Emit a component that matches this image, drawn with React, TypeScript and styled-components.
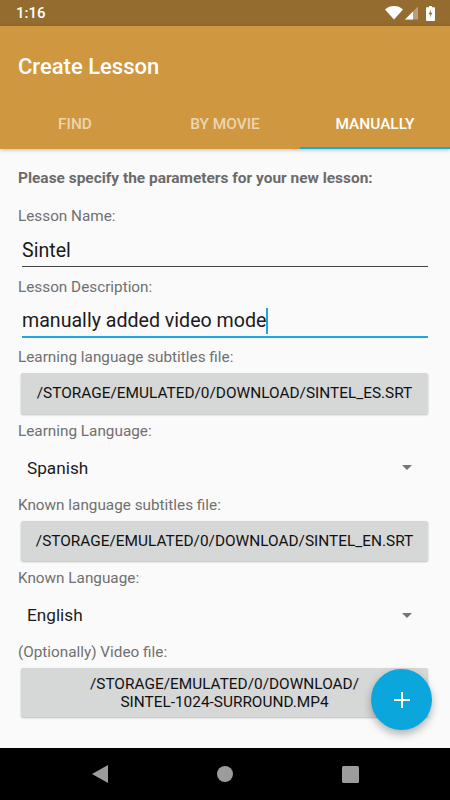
import React, { FC } from 'react';
import styled, { createGlobalStyle } from 'styled-components';

const GlobalStyle = createGlobalStyle`
  html, body {
    margin: 0;
    padding: 0;
    background: #000;
  }

  body {
    font-family: Roboto, "Liberation Sans", sans-serif;
  }
`;

const Screen = styled.div`
  display: flex;
  flex-direction: column;
  width: 450px;
  height: 800px;
  overflow: hidden;
`;

const StatusBar = styled.div`
  display: flex;
  flex-direction: row;
  align-items: center;
  justify-content: space-between;
  height: 26px;
  padding: 0 15px 0 16px;
  box-sizing: border-box;
  background: #946c30;
  color: #fff;
  font-size: 15px;
  font-weight: 500;
`;

const StatusIcons = styled.div`
  display: flex;
  flex-direction: row;
  align-items: center;
  gap: 2px;

  svg:last-child {
    margin-left: 6px;
  }
`;

const AppBar = styled.div`
  position: relative;
  z-index: 1;
  display: flex;
  flex-direction: column;
  height: 123px;
  background: #cf9840;
  box-shadow: 0 1px 4px rgba(0, 0, 0, 0.25);
`;

const Title = styled.div`
  height: 81px;
  padding: 0 18px;
  line-height: 81px;
  color: #fff;
  font-size: 22px;
  font-weight: 500;
`;

const Tabs = styled.div`
  display: flex;
  flex-direction: row;
  height: 42px;
`;

const Tab = styled.div<{ $active?: boolean }>`
  flex: 1;
  box-sizing: border-box;
  height: 42px;
  line-height: 35px;
  text-align: center;
  font-size: 15.4px;
  font-weight: 500;
  color: ${(p) => (p.$active ? '#fff' : 'rgba(255, 255, 255, 0.6)')};
  border-bottom: 2px solid ${(p) => (p.$active ? '#1ba8df' : 'transparent')};
`;

const Content = styled.div`
  position: relative;
  flex: 1;
  display: flex;
  flex-direction: column;
  padding: 19px 18px 0;
  background: #fafafa;
`;

const Heading = styled.div`
  height: 20px;
  line-height: 20px;
  margin-bottom: 18px;
  color: #6b6b6b;
  font-size: 15.45px;
  font-weight: 700;
`;

const Label = styled.div`
  height: 20px;
  line-height: 20px;
  color: #707070;
  font-size: 15.3px;
`;

const TextField = styled.div<{ $focused?: boolean }>`
  display: flex;
  align-items: center;
  height: 30px;
  padding-top: 9px;
  margin: ${(p) => (p.$focused ? '0 4px 9px' : '1px 4px 10px')};
  border-bottom: ${(p) => (p.$focused ? '2px solid #1ba8df' : '1px solid #444')};
  color: #1a1a1a;
  font-size: 19.6px;
  line-height: 24px;
`;

const Caret = styled.span`
  display: inline-block;
  width: 2px;
  height: 26px;
  background: #1ba8df;
`;

const FileButton = styled.div<{ $tall?: boolean }>`
  display: flex;
  align-items: center;
  justify-content: center;
  height: ${(p) => (p.$tall ? '49px' : '40.5px')};
  margin: 6px 4px 7px 3px;
  border-radius: 2px;
  background: #d6d7d7;
  box-shadow: 0 1px 2px rgba(0, 0, 0, 0.25);
  color: #111;
  font-size: 15.4px;
  font-weight: 400;
  line-height: 18px;
  text-align: center;
  white-space: nowrap;
`;

const Spinner = styled.div`
  display: flex;
  flex-direction: row;
  align-items: center;
  justify-content: space-between;
  height: 40px;
  margin: 7px 0;
  padding: 0 20px 0 9px;
  color: #1a1a1a;
  font-size: 17.2px;
`;

const SpinnerArrow = styled.div`
  width: 0;
  height: 0;
  border-left: 5.5px solid transparent;
  border-right: 5.5px solid transparent;
  border-top: 5.5px solid #757575;
`;

const Fab = styled.div`
  position: absolute;
  right: 18px;
  top: 520px;
  display: flex;
  align-items: center;
  justify-content: center;
  width: 61px;
  height: 61px;
  border-radius: 50%;
  background: #0ba7dc;
  box-shadow: 0 4px 8px rgba(0, 0, 0, 0.3);
`;

const NavBar = styled.div`
  display: flex;
  flex-direction: row;
  align-items: center;
  justify-content: center;
  gap: 109px;
  height: 52px;
  background: #000;
`;

const NavIcon = styled.svg<{ $w: number; $h: number }>`
  width: ${(p) => p.$w}px;
  height: ${(p) => p.$h}px;
  fill: #9c9c9c;
`;

const WifiIcon: FC = () => (
  <svg width="18" height="14" viewBox="0 0 18 14">
    <path d="M0 3.4C2.5 1.2 5.6 0 9 0s6.5 1.2 9 3.4L9 13.6z" fill="#fff" />
  </svg>
);

const SignalIcon: FC = () => (
  <svg width="13" height="14" viewBox="0 0 13 14">
    <path d="M13 0.5V13.5H0z" fill="#fff" fillOpacity="0.35" />
    <path d="M8 5.5V13.5H0z" fill="#fff" />
  </svg>
);

const BatteryIcon: FC = () => (
  <svg width="9" height="15" viewBox="0 0 9 15">
    <path d="M3 0h3v1.2h2.2a.8.8 0 0 1 .8.8v12.2a.8.8 0 0 1-.8.8H.8a.8.8 0 0 1-.8-.8V2a.8.8 0 0 1 .8-.8H3z" fill="#fff" />
    <path d="M5.2 3.2L2.6 8.2h1.8L3.6 12l2.8-5.2H4.6z" fill="#946c30" />
  </svg>
);

const PlusIcon: FC = () => (
  <svg width="16" height="16" viewBox="0 0 16 16">
    <path d="M7 0h2v7h7v2H9v7H7V9H0V7h7z" fill="#fff" />
  </svg>
);

export default function App() {
  return (
    <Screen>
      <GlobalStyle />
      <StatusBar>
        <span>1:16</span>
        <StatusIcons>
          <WifiIcon />
          <SignalIcon />
          <BatteryIcon />
        </StatusIcons>
      </StatusBar>
      <AppBar>
        <Title>Create Lesson</Title>
        <Tabs>
          <Tab>FIND</Tab>
          <Tab>BY MOVIE</Tab>
          <Tab $active>MANUALLY</Tab>
        </Tabs>
      </AppBar>
      <Content>
        <Heading>Please specify the parameters for your new lesson:</Heading>
        <Label>Lesson Name:</Label>
        <TextField>Sintel</TextField>
        <Label>Lesson Description:</Label>
        <TextField $focused>
          manually added video mode
          <Caret />
        </TextField>
        <Label>Learning language subtitles file:</Label>
        <FileButton>/STORAGE/EMULATED/0/DOWNLOAD/SINTEL_ES.SRT</FileButton>
        <Label>Learning Language:</Label>
        <Spinner>
          Spanish
          <SpinnerArrow />
        </Spinner>
        <Label>Known language subtitles file:</Label>
        <FileButton>/STORAGE/EMULATED/0/DOWNLOAD/SINTEL_EN.SRT</FileButton>
        <Label>Known Language:</Label>
        <Spinner>
          English
          <SpinnerArrow />
        </Spinner>
        <Label>(Optionally) Video file:</Label>
        <FileButton $tall>
          /STORAGE/EMULATED/0/DOWNLOAD/
          <br />
          SINTEL-1024-SURROUND.MP4
        </FileButton>
        <Fab>
          <PlusIcon />
        </Fab>
      </Content>
      <NavBar>
        <NavIcon $w={16} $h={18} viewBox="0 0 16 18">
          <path d="M16 0V18L0 9z" />
        </NavIcon>
        <NavIcon $w={16} $h={16} viewBox="0 0 16 16">
          <circle cx="8" cy="8" r="8" />
        </NavIcon>
        <NavIcon $w={17} $h={17} viewBox="0 0 17 17">
          <rect width="17" height="17" rx="1.5" />
        </NavIcon>
      </NavBar>
    </Screen>
  );
}
